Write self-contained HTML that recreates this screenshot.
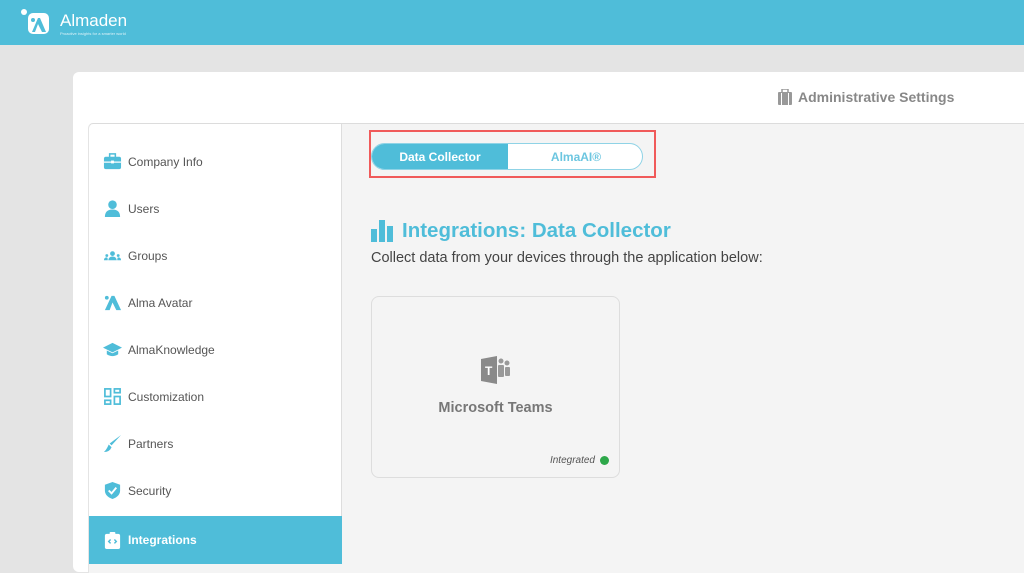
<!DOCTYPE html>
<html><head><meta charset="utf-8"><style>
*{margin:0;padding:0;box-sizing:border-box}
body{width:1024px;height:564px;overflow:hidden;background:#e4e4e4;font-family:"Liberation Sans",sans-serif;position:relative}
.hdr{position:absolute;left:0;top:0;width:1024px;height:45px;background:#4fbdd9}
.card{position:absolute;left:73px;top:72px;width:960px;height:500px;background:#fff;border-radius:6px}
.inner{position:absolute;left:88px;top:123px;width:940px;height:450px;background:#f4f4f4;border-top:1px solid #dcdcdc;border-left:1px solid #e4e4e4;border-radius:5px 0 0 0}
.side{position:absolute;left:88px;top:124px;width:254px;height:440px;background:#fff;border-right:1px solid #ddd;border-left:1px solid #e4e4e4;border-radius:5px 0 0 0}
.it{position:absolute;left:0;width:253px;height:47px;display:flex;align-items:center;padding-left:14px;font-size:12px;color:#555}
.it svg{width:19px;height:19px;margin-right:6px;fill:#4fbdd9}
.act{background:#4fbdd9;color:#fff;font-weight:bold}
.act svg{fill:#fff}
</style></head><body>
<div class="hdr">
<svg style="position:absolute;left:20px;top:8px" width="40" height="32" viewBox="0 0 40 32"><circle cx="4" cy="4" r="3" fill="#fff"/><rect x="8" y="5" width="21" height="21" rx="5" fill="#fff"/><path d="M12 24 L18 10 L20 10 L26 24 L22 24 L18 16 L15 24Z" fill="#4fbdd9"/><circle cx="13" cy="12" r="2" fill="#4fbdd9"/></svg>
<div style="position:absolute;left:60px;top:11px;color:#fff;font-size:17px">Almaden</div>
<div style="position:absolute;left:60px;top:31px;color:#fff;font-size:4px;opacity:.8">Proactive insights for a smarter world</div>
</div>
<div class="card"></div>
<div style="position:absolute;left:778px;top:89px;font-size:14px;font-weight:bold;color:#888;display:flex;align-items:center"><svg width="14" height="16" viewBox="0 0 14 16" style="margin-right:6px"><rect x="0" y="3" width="14" height="13" rx="1" fill="#999"/><rect x="4" y="0" width="6" height="4" fill="none" stroke="#999" stroke-width="1.5"/><rect x="3" y="4" width="1" height="12" fill="#fff"/><rect x="10" y="4" width="1" height="12" fill="#fff"/></svg>Administrative Settings</div>
<div class="inner"></div>
<div class="side">
<div class="it" style="top:14px"><svg viewBox="0 0 20 20"><rect x="1" y="5" width="18" height="13" rx="2"/><rect x="7" y="2" width="6" height="4" fill="none" stroke="#4fbdd9" stroke-width="1.6"/><rect x="1" y="10" width="18" height="1.3" fill="#fff"/><rect x="8.5" y="9" width="3" height="3" fill="#fff"/></svg>Company Info</div>
<div class="it" style="top:61px"><svg viewBox="0 0 20 20"><circle cx="10" cy="6" r="4.5"/><path d="M2 19 Q2 11 10 11 Q18 11 18 19Z"/></svg>Users</div>
<div class="it" style="top:108px"><svg viewBox="0 0 20 20"><circle cx="10" cy="8" r="2.5"/><path d="M5.5 15 Q6 11 10 11 Q14 11 14.5 15Z"/><circle cx="4" cy="10" r="1.5"/><circle cx="16" cy="10" r="1.5"/><path d="M1 15 Q1 12 4 12 Q5 12 5 15Z"/><path d="M15 15 Q15 12 16 12 Q19 12 19 15Z"/></svg>Groups</div>
<div class="it" style="top:155px"><svg viewBox="0 0 20 20"><circle cx="4" cy="5" r="2"/><path d="M2 18 L9 3 L12 3 L19 18 L14 18 L10 10 L7 18Z"/></svg>Alma Avatar</div>
<div class="it" style="top:202px"><svg viewBox="0 0 20 20"><path d="M0 8 L10 3 L20 8 L10 13Z"/><path d="M4 11 L4 15 Q10 19 16 15 L16 11 L10 14Z"/></svg>AlmaKnowledge</div>
<div class="it" style="top:249px"><svg viewBox="0 0 20 20" style="fill:none;stroke:#4fbdd9;stroke-width:1.8"><rect x="2" y="2" width="6" height="8"/><rect x="12" y="2" width="6" height="4"/><rect x="2" y="14" width="6" height="4"/><rect x="12" y="10" width="6" height="8"/></svg>Customization</div>
<div class="it" style="top:296px"><svg viewBox="0 0 20 20"><path d="M19 1 L9 12 L7 10 Z"/><path d="M6 11 L9 14 Q7 19 1 19 Q4 16 6 11Z"/></svg>Partners</div>
<div class="it" style="top:343px"><svg viewBox="0 0 20 20"><path d="M10 1 L18 4 L18 10 Q18 16 10 19 Q2 16 2 10 L2 4Z"/><path d="M6 10 L9 13 L14 7" stroke="#fff" stroke-width="2" fill="none"/></svg>Security</div>
<div class="it act" style="top:392px;height:48px"><svg viewBox="0 0 20 20"><rect x="2" y="3" width="16" height="16" rx="2"/><rect x="7" y="1" width="6" height="4" rx="1"/><path d="M8 9 L6 11 L8 13 M12 9 L14 11 L12 13" stroke="#4fbdd9" stroke-width="1.5" fill="none"/></svg>Integrations</div>
</div>
<div style="position:absolute;left:369px;top:130px;width:287px;height:48px;border:2px solid #f05a5a"></div>
<div style="position:absolute;left:371px;top:143px;width:272px;height:27px;border:1.5px solid #8fd3e6;border-radius:14px;overflow:hidden;background:#fff">
<div style="position:absolute;left:0;top:0;width:136px;height:100%;background:#4fbdd9;color:#fff;font-size:12px;font-weight:bold;display:flex;align-items:center;justify-content:center">Data Collector</div>
<div style="position:absolute;left:136px;top:0;width:136px;height:100%;color:#6cc6e0;font-size:12px;font-weight:bold;display:flex;align-items:center;justify-content:center">AlmaAI®</div>
</div>
<div style="position:absolute;left:371px;top:219px;display:flex;align-items:center;color:#4fbdd9;font-size:20.5px;font-weight:bold"><svg width="25" height="22" viewBox="0 0 25 22" style="margin-right:6px"><rect x="0" y="9" width="6" height="13" fill="#4fbdd9"/><rect x="8" y="0" width="6" height="22" fill="#4fbdd9"/><rect x="16" y="6" width="6" height="16" fill="#4fbdd9"/></svg>Integrations: Data Collector</div>
<div style="position:absolute;left:371px;top:250px;font-size:14.5px;color:#444">Collect data from your devices through the application below:</div>
<div style="position:absolute;left:371px;top:296px;width:249px;height:182px;border:1px solid #ddd;border-radius:8px;background:#f4f4f4">
<svg style="position:absolute;left:109px;top:58px" width="30" height="30" viewBox="0 0 30 30"><path d="M0 4 L16 1 L16 29 L0 26Z" fill="#8a8a8a"/><text x="4" y="20" font-size="12" font-weight="bold" fill="#fff" font-family="Liberation Sans">T</text><circle cx="20" cy="6" r="2.5" fill="#999"/><circle cx="26" cy="8" r="2.5" fill="#999"/><rect x="17" y="10" width="6" height="12" rx="1" fill="#999"/><rect x="24" y="12" width="5" height="9" rx="1" fill="#999"/></svg>
<div style="position:absolute;left:0;width:247px;top:103px;text-align:center;font-size:14.5px;font-weight:bold;color:#777">Microsoft Teams</div>
<div style="position:absolute;right:10px;top:158px;font-size:10px;font-style:italic;color:#555;display:flex;align-items:center">Integrated<span style="display:inline-block;width:9px;height:9px;border-radius:50%;background:#2ea84a;margin-left:5px"></span></div>
</div>
</body></html>
